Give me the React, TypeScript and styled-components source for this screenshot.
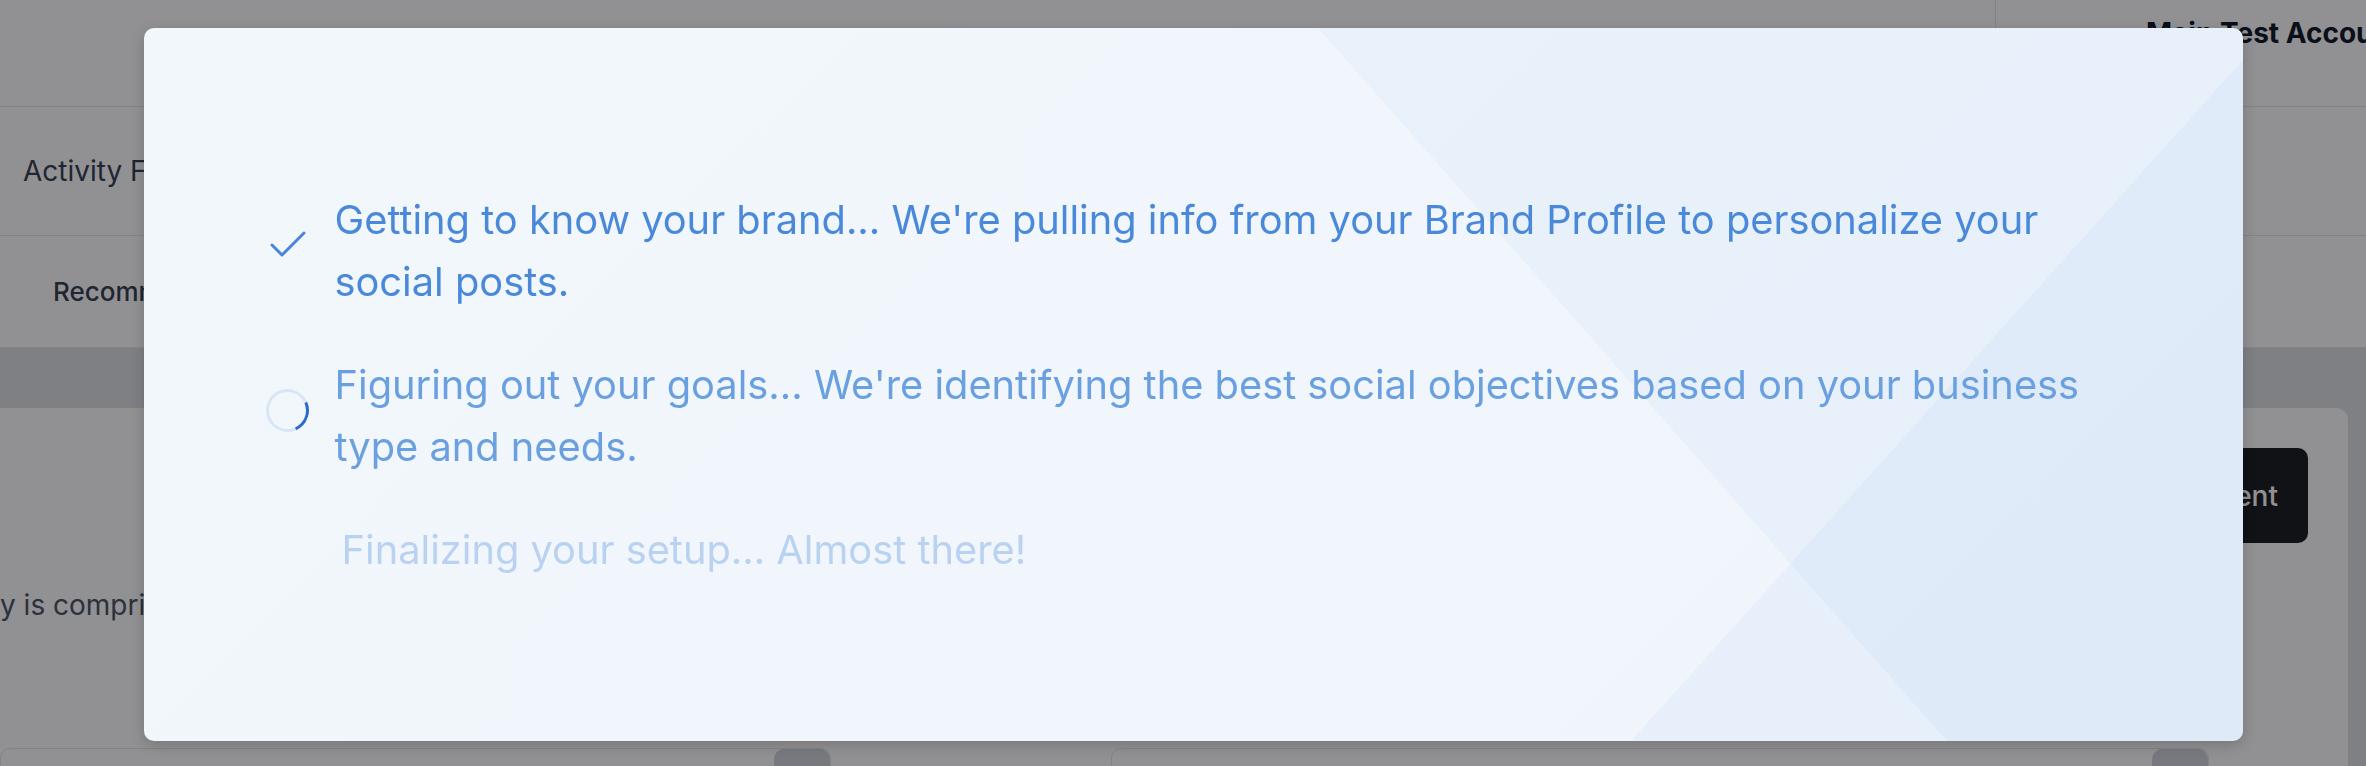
import React from "react";
import styled, { createGlobalStyle } from "styled-components";

type StepState = "done" | "active" | "pending";

const GlobalStyle = createGlobalStyle`
  html, body {
    margin: 0;
    padding: 0;
  }
  body {
    width: 2366px;
    height: 766px;
    overflow: hidden;
    background: #ffffff;
    font-family: Inter, "Noto Sans", "Liberation Sans", sans-serif;
  }
  * {
    box-sizing: border-box;
  }
`;

/* ---------- page behind the dialog ---------- */

const Page = styled.div`
  height: 766px;
  display: flex;
  flex-direction: column;
  background: #ffffff;
  color: #111827;
  overflow: hidden;
`;

const Header = styled.header`
  height: 107px;
  flex-shrink: 0;
  display: flex;
  justify-content: flex-end;
  border-bottom: 1px solid #e5e7eb;
`;

const AccountArea = styled.div`
  width: 371px;
  border-left: 1px solid #e5e7eb;
  padding: 16px 0 0 150px;
  font-size: 28px;
  font-weight: 700;
  white-space: nowrap;
  overflow: hidden;
`;

const TabRow = styled.nav<{ $height: number; $indent: number }>`
  height: ${(p) => p.$height}px;
  flex-shrink: 0;
  display: flex;
  align-items: center;
  padding-left: ${(p) => p.$indent}px;
  border-bottom: 1px solid #e5e7eb;
`;

const TabLabel = styled.span<{ $size: number; $weight: number }>`
  font-size: ${(p) => p.$size}px;
  font-weight: ${(p) => p.$weight};
  color: #374151;
`;

const Main = styled.main`
  flex: 1;
  background: #dfe1e5;
  padding: 60px 18px 0 0;
`;

const Card = styled.section`
  height: 100%;
  background: #ffffff;
  border-radius: 0 12px 0 0;
  padding: 40px 40px 0 0;
`;

const CardHeader = styled.div`
  display: flex;
  justify-content: flex-end;
`;

const DarkButton = styled.button`
  height: 95px;
  padding: 0 30px;
  border: none;
  border-radius: 10px;
  background: #1c1d21;
  color: #ffffff;
  font-family: inherit;
  font-size: 28px;
  font-weight: 500;
`;

const Description = styled.p`
  margin: 42px 0 0;
  font-size: 28px;
  line-height: 40px;
  color: #4b5563;
  white-space: nowrap;
`;

const FieldRow = styled.div`
  margin-top: 123px;
  display: flex;
  gap: 280px;
`;

const Field = styled.div<{ $width: number }>`
  width: ${(p) => p.$width}px;
  height: 60px;
  display: flex;
  align-items: center;
  justify-content: space-between;
  padding-left: 24px;
  border: 1px solid #e5e7eb;
  border-radius: 10px;
  font-size: 26px;
  color: #374151;
`;

const FieldHandle = styled.span`
  width: 56px;
  align-self: stretch;
  background: #d1d5db;
  border-radius: 10px 10px 0 0;
`;

/* ---------- dialog ---------- */

const Overlay = styled.div`
  position: fixed;
  inset: 0;
  display: flex;
  align-items: flex-start;
  justify-content: center;
  padding: 28px 0 0 20px;
  background: rgba(4, 4, 10, 0.44);
`;

const Dialog = styled.div`
  position: relative;
  width: 2099px;
  height: 713px;
  overflow: hidden;
  border-radius: 10px;
  background: linear-gradient(135deg, #f2f7fc 0%, #eff5fb 100%);
  box-shadow: 0 4px 14px rgba(0, 0, 0, 0.18);
`;

const Decor = styled.svg`
  position: absolute;
  inset: 0;
  width: 100%;
  height: 100%;
`;

const StepList = styled.ul`
  position: relative;
  height: 100%;
  margin: 0;
  padding: 0 120px;
  list-style: none;
  display: flex;
  flex-direction: column;
  justify-content: center;
  gap: 41px;
`;

const stepColor: Record<StepState, string> = {
  done: "#4a89d9",
  active: "#6aa0e0",
  pending: "#bad2f1",
};

const Step = styled.li<{ $state: StepState }>`
  display: flex;
  align-items: center;
  gap: 23px;
  color: ${(p) => stepColor[p.$state]};
  transform: ${(p) => (p.$state === "pending" ? "translateX(7px)" : "none")};
`;

const IconBox = styled.span`
  width: 48px;
  height: 48px;
  flex-shrink: 0;
  margin-bottom: 11px;
  display: flex;
  align-items: center;
  justify-content: center;
`;

const Spinner = styled.span`
  width: 43px;
  height: 43px;
  border-radius: 50%;
  border: 3px solid #d7e5f6;
  border-right-color: #2c69cc;
  transform: rotate(21deg);
`;

const StepText = styled.span`
  flex: 1;
  font-size: 39.8px;
  line-height: 62px;
`;

const steps: { state: StepState; text: string }[] = [
  {
    state: "done",
    text: "Getting to know your brand... We're pulling info from your Brand Profile to personalize your social posts.",
  },
  {
    state: "active",
    text: "Figuring out your goals... We're identifying the best social objectives based on your business type and needs.",
  },
  {
    state: "pending",
    text: "Finalizing your setup... Almost there!",
  },
];

const CheckIcon: React.FC = () => (
  <svg width="48" height="48" viewBox="0 0 24 24" fill="none">
    <path
      d="M20 6 9 17l-5-5"
      stroke="#4a86d6"
      strokeWidth="1.5"
      strokeLinecap="round"
      strokeLinejoin="round"
    />
  </svg>
);

const StepIcon: React.FC<{ state: StepState }> = ({ state }) => {
  if (state === "done") return <CheckIcon />;
  if (state === "active") return <Spinner />;
  return null;
};

const App: React.FC = () => {
  return (
    <>
      <GlobalStyle />
      <Page>
        <Header>
          <AccountArea>Main Test Account</AccountArea>
        </Header>
        <TabRow $height={129} $indent={23}>
          <TabLabel $size={28} $weight={400}>
            Activity Feed
          </TabLabel>
        </TabRow>
        <TabRow $height={112} $indent={53}>
          <TabLabel $size={26} $weight={500}>
            Recommended
          </TabLabel>
        </TabRow>
        <Main>
          <Card>
            <CardHeader>
              <DarkButton>Create Content</DarkButton>
            </CardHeader>
            <Description>
              y is comprised of posts recommended for your brand.
            </Description>
            <FieldRow>
              <Field $width={831}>
                a
                <FieldHandle />
              </Field>
              <Field $width={1098}>
                N
                <FieldHandle />
              </Field>
            </FieldRow>
          </Card>
        </Main>
      </Page>

      <Overlay>
        <Dialog>
          <Decor viewBox="0 0 2099 713" preserveAspectRatio="none">
            <polygon
              points="1174,0 2099,0 2099,713 1803,713"
              fill="rgba(70, 140, 230, 0.045)"
            />
            <polygon
              points="2099,32 2099,713 1487,713"
              fill="rgba(70, 140, 230, 0.05)"
            />
          </Decor>
          <StepList>
            {steps.map((step) => (
              <Step key={step.text} $state={step.state}>
                <IconBox>
                  <StepIcon state={step.state} />
                </IconBox>
                <StepText>{step.text}</StepText>
              </Step>
            ))}
          </StepList>
        </Dialog>
      </Overlay>
    </>
  );
};

export default App;
